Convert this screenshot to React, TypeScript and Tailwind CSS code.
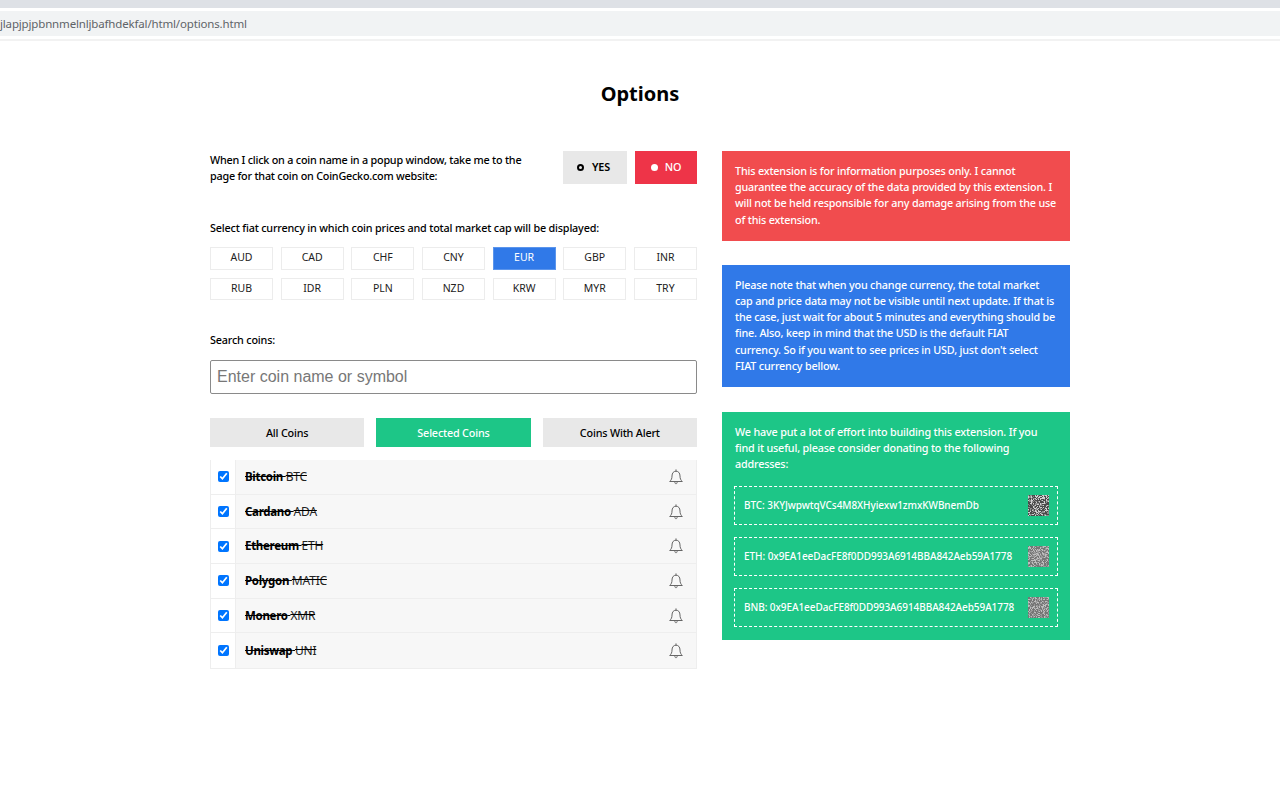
const FONT = "font-['Noto_Sans','Liberation_Sans',sans-serif]";
const currencies = ["AUD","CAD","CHF","CNY","EUR","GBP","INR","RUB","IDR","PLN","NZD","KRW","MYR","TRY"];
const coins = [["Bitcoin","BTC"],["Cardano","ADA"],["Ethereum","ETH"],["Polygon","MATIC"],["Monero","XMR"],["Uniswap","UNI"]];
const wallets = [
  ["BTC: 3KYJwpwtqVCs4M8XHyiexw1zmxKWBnemDb", 7, 1],
  ["ETH: 0x9EA1eeDacFE8f0DD993A6914BBA842Aeb59A1778", 23, 0.6],
  ["BNB: 0x9EA1eeDacFE8f0DD993A6914BBA842Aeb59A1778", 41, 0.6],
] as const;

function Qr({ seed, contrast }: { seed: number; contrast: number }) {
  let s = seed;
  const cells: { x: number; y: number; v: number }[] = [];
  for (let y = 0; y < 21; y++) {
    for (let x = 0; x < 21; x++) {
      s = (s * 1103515245 + 12345) & 0x7fffffff;
      cells.push({ x, y, v: (s >> 16) % 100 });
    }
  }
  const dark = contrast === 1 ? "#4a4a4a" : "#767676";
  const mid = contrast === 1 ? "#8c8c8c" : "#989898";
  const light = contrast === 1 ? "#d0d0d0" : "#bdbdbd";
  return (
    <svg width="21" height="21" viewBox="0 0 21 21" className="shrink-0 block">
      <rect width="21" height="21" fill={light} />
      {cells.map((c) => (
        <rect key={c.x + "-" + c.y} x={c.x} y={c.y} width="1" height="1" fill={c.v < 45 ? dark : c.v < 75 ? mid : light} />
      ))}
    </svg>
  );
}

function BellIcon() {
  return (
    <svg width="14" height="16" viewBox="0 0 14 16" fill="none" stroke="#666" strokeWidth="1" className="block shrink-0">
      <path d="M7 .8v1.4" strokeLinecap="round" />
      <path d="M3 7c0-3 1.6-4.8 4-4.8S11 4 11 7c0 2.6.7 4 2.3 5.5H.7C2.3 11 3 9.6 3 7Z" strokeLinejoin="round" />
      <path d="M5.8 12.5c0 1.5.5 2.3 1.2 2.3s1.2-.8 1.2-2.3" />
    </svg>
  );
}

const label = "text-[10.8px] tracking-[-0.18px] font-medium";

export default function App() {
  return (
    <div className={`${FONT} min-h-[800px] bg-white text-black overflow-hidden`}>
      <div className="h-2 bg-[#dee1e6]" />
      <div className="mt-[3px] h-[25px] bg-[#f1f3f4] flex items-center text-[11.5px] tracking-[-0.16px] text-[#5f6368] whitespace-nowrap overflow-hidden">
        jlapjpjpbnnmelnljbafhdekfal/html/options.html
      </div>
      <div className="mt-[3px] h-[2px] bg-[#f2f2f2]" />
      <h1 className="mt-[40px] h-[26px] leading-[26px] text-center text-[20px] font-bold">Options</h1>
      <div className="mx-auto mt-[44px] w-[860px] flex gap-[25px] items-start">
        <div className="w-[487px]">
          <div className="flex items-center justify-between h-[33px]">
            <p className={`w-[320px] leading-[16px] text-[10.8px] tracking-[-0.22px] font-medium`}>When I click on a coin name in a popup window, take me to the page for that coin on CoinGecko.com website:</p>
            <div className="flex gap-2">
              <button className="w-16 h-[33px] pr-[3px] bg-[#e8e8e8] text-[10.8px] tracking-[-0.18px] font-semibold flex items-center justify-center gap-[8px]">
                <span className="w-[7px] h-[7px] rounded-full border-2 border-black" />YES
              </button>
              <button className="w-[62px] h-[33px] bg-[#ee3448] text-white text-[10.8px] tracking-[-0.18px] font-medium flex items-center justify-center gap-[7px]">
                <span className="w-[7px] h-[7px] rounded-full bg-white" />NO
              </button>
            </div>
          </div>
          <p className={`mt-[36px] leading-4 ${label}`}>Select fiat currency in which coin prices and total market cap will be displayed:</p>
          <div className="mt-[11px] grid grid-cols-[repeat(7,63px)] justify-between gap-y-2">
            {currencies.map((c) => (
              <div key={c} className={`h-[22.5px] flex items-center justify-center text-[10.5px] border ${c === "EUR" ? "bg-[#3079e8] border-[#5b95ec] text-white" : "border-[#ececec] text-[#222]"}`}>{c}</div>
            ))}
          </div>
          <p className={`mt-[32px] leading-4 ${label}`}>Search coins:</p>
          <input readOnly placeholder="Enter coin name or symbol" className="mt-[12px] w-full h-[34px] px-[6px] border border-[#8a8a8a] rounded-[2px] text-[16px] font-['Liberation_Sans',sans-serif] placeholder:text-[#777] outline-none" />
          <div className="mt-[24px] flex gap-3">
            <button className={`flex-1 h-[29px] pt-px bg-[#e8e8e8] ${label}`}>All Coins</button>
            <button className={`flex-1 h-[29px] pt-px bg-[#1dc687] text-white ${label}`}>Selected Coins</button>
            <button className={`flex-1 h-[29px] pt-px bg-[#e8e8e8] ${label}`}>Coins With Alert</button>
          </div>
          <div className="mt-[13px] border-x border-b border-[#eee]">
            {coins.map(([name, sym]) => (
              <div key={name} className="flex h-[34.7px] border-b border-[#eee] last:border-b-0">
                <div className="w-[25px] flex items-center justify-center border-r border-[#eee] shrink-0">
                  <input type="checkbox" checked readOnly className="w-[11px] h-[11px] accent-[#0075ff]" />
                </div>
                <div className="flex-1 bg-[#f7f7f7] flex items-center justify-between pl-[9px] pr-[13px]">
                  <span className="text-[11.5px] tracking-[-0.3px] line-through"><b className="font-bold">{name}</b> <span className="text-[#222] text-[12px] tracking-[-0.2px]">{sym}</span></span>
                  <BellIcon />
                </div>
              </div>
            ))}
          </div>
        </div>
        <div className="w-[348px] flex flex-col text-white text-[10.8px] tracking-[-0.18px] leading-[16.2px] font-medium">
          <div className="bg-[#f14c4e] px-[13px] pt-[12px] pb-[13px]">This extension is for information purposes only. I cannot guarantee the accuracy of the data provided by this extension. I will not be held responsible for any damage arising from the use of this extension.</div>
          <div className="mt-[24px] bg-[#3079e8] pl-[13px] pr-[14px] pt-[12px] pb-[13px]">Please note that when you change currency, the total market cap and price data may not be visible until next update. If that is the case, just wait for about 5 minutes and everything should be fine. Also, keep in mind that the USD is the default FIAT currency. So if you want to see prices in USD, just don't select FIAT currency bellow.</div>
          <div className="mt-[25px] bg-[#1dc687] px-[12px] pt-[12px] pb-[13px]">
            <p className="px-px">We have put a lot of effort into building this extension. If you find it useful, please consider donating to the following addresses:</p>
            <div className="mt-[13px] flex flex-col gap-3">
              {wallets.map(([t, seed, contrast]) => (
                <div key={t} className="h-[39px] border border-dashed border-white pl-[9px] pr-2 flex items-center justify-between text-[10px] tracking-[-0.07px] whitespace-nowrap">
                  <span>{t}</span>
                  <Qr seed={seed} contrast={contrast} />
                </div>
              ))}
            </div>
          </div>
        </div>
      </div>
    </div>
  );
}
